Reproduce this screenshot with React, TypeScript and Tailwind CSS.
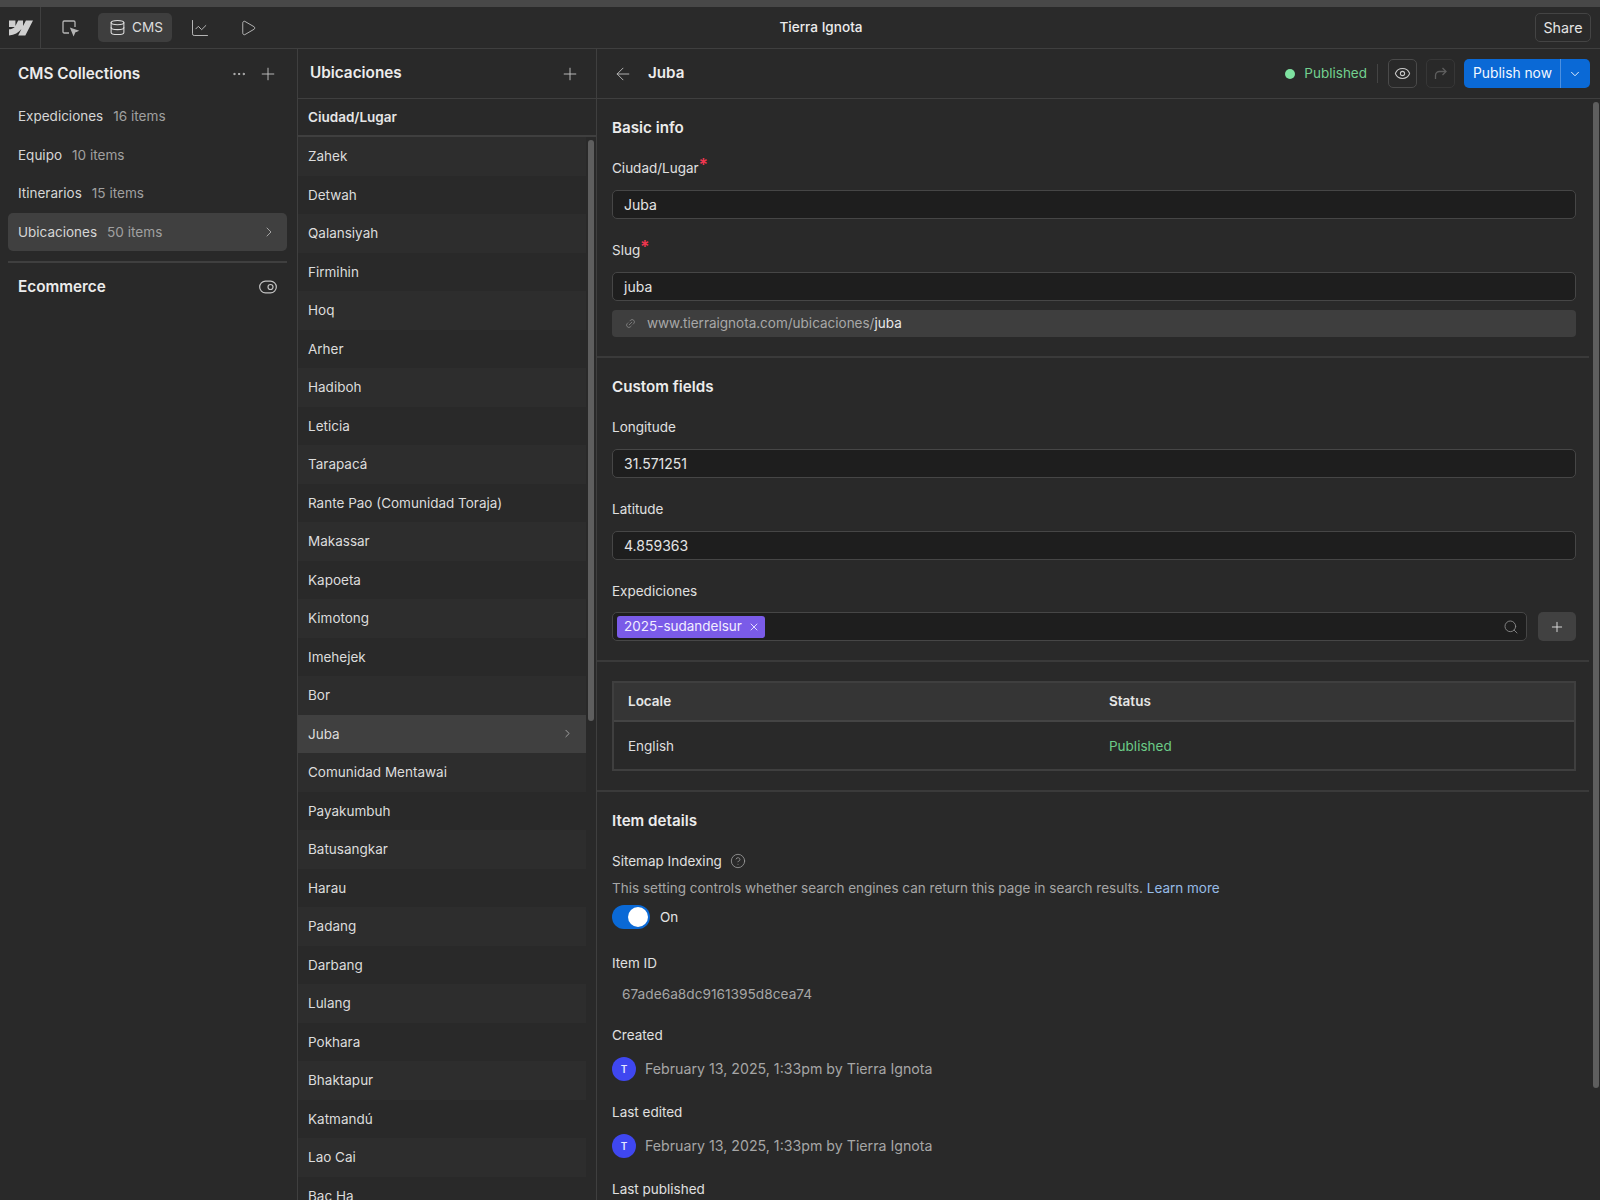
import { ReactNode } from 'react';
import { ArrowLeft, ChartLine, ChevronDown, ChevronRight, CircleHelp, Database, Ellipsis, Eye, Link2, Play, Plus, Search, ToggleRight, X } from 'lucide-react';
import { SiWebflow } from 'react-icons/si';

const collections = [
  { name: 'Expediciones', count: '16 items' },
  { name: 'Equipo', count: '10 items' },
  { name: 'Itinerarios', count: '15 items' },
  { name: 'Ubicaciones', count: '50 items', active: true },
];

const places = [
  'Zahek', 'Detwah', 'Qalansiyah', 'Firmihin', 'Hoq', 'Arher', 'Hadiboh', 'Leticia', 'Tarapacá',
  'Rante Pao (Comunidad Toraja)', 'Makassar', 'Kapoeta', 'Kimotong', 'Imehejek', 'Bor', 'Juba',
  'Comunidad Mentawai', 'Payakumbuh', 'Batusangkar', 'Harau', 'Padang', 'Darbang', 'Lulang',
  'Pokhara', 'Bhaktapur', 'Katmandú', 'Lao Cai', 'Bac Ha',
];

function Label({ children, className = '' }: { children: ReactNode; className?: string }) {
  return <div className={`h-5 leading-5 text-[13.5px] text-[#e0e0e0] ${className}`}>{children}</div>;
}

function Heading({ children }: { children: ReactNode }) {
  return <h2 className="h-5 leading-[22px] text-[15.2px] font-semibold text-[#ececec]">{children}</h2>;
}

function Required() {
  return <span className="relative -top-[2px] text-[17px] leading-none font-semibold text-[#f0364f]">*</span>;
}

function TextInput({ value, className = '' }: { value: string; className?: string }) {
  return (
    <div className={`h-[29px] rounded-[5px] border border-[#464646] bg-[#1e1e1e] px-[11px] leading-[27px] text-[14px] text-[#e4e4e4] ${className}`}>
      {value}
    </div>
  );
}

function Avatar() {
  return (
    <div className="flex items-center gap-[9px] h-6 mt-3">
      <span className="flex h-6 w-6 items-center justify-center rounded-full bg-[#3f47f0] text-[10px] font-semibold text-[#e6e8ff]">T</span>
      <span className="text-[14.2px] text-[#a6a6a6]">February 13, 2025, 1:33pm by Tierra Ignota</span>
    </div>
  );
}

export default function App() {
  return (
    <div className="h-[1200px] w-[1600px] overflow-hidden bg-[#292929] font-['Inter',sans-serif] text-[13.5px] text-[#e0e0e0] flex flex-col">
      <div className="h-[7px] shrink-0 bg-[#484848]" />

      {/* top bar */}
      <header className="h-[42px] shrink-0 flex items-center border-b border-[#3f3f3f] bg-[#2a2a2a]">
        <div className="flex h-full w-[41px] items-center justify-center border-r border-[#3f3f3f]">
          <SiWebflow size={24} color="#cfcfcf" className="ml-px" />
        </div>
        <div className="flex items-center ml-[19px]">
          <svg width="20" height="20" viewBox="0 0 20 20" fill="none" stroke="#b5b5b5" strokeWidth="1.3">
            <path d="M9 15H4.2c-.7 0-1.2-.5-1.2-1.2V4.2C3 3.5 3.5 3 4.2 3h9.6c.7 0 1.2.5 1.2 1.2V9" />
            <path d="M11 10.5l6.5 2.4-2.7 1.1-1.2 2.8z" fill="#b5b5b5" />
          </svg>
          <div className="ml-[18px] flex h-[29px] w-[74px] items-center gap-[6px] rounded-[5px] bg-[#3e3e3e] pl-[11px] text-[#dcdcdc]">
            <Database size={17} strokeWidth={1.5} />
            <span className="text-[13.6px]">CMS</span>
          </div>
          <ChartLine size={20} strokeWidth={1.2} className="ml-[18px] text-[#b5b5b5]" />
          <Play size={18} strokeWidth={1.3} className="ml-[29px] text-[#b5b5b5]" />
        </div>
        <div className="flex-1 text-center text-[13.6px] font-medium text-[#ececec] pr-[150px]">Tierra Ignota</div>
        <div className="mr-[9px] flex h-[29px] w-[56px] items-center justify-center rounded-[5px] border border-[#444444] text-[14.3px] text-[#e4e4e4]">Share</div>
      </header>

      <div className="flex flex-1 min-h-0">
        {/* collections */}
        <aside className="w-[298px] shrink-0 border-r border-[#3f3f3f] pl-[8px] pr-[10px]">
          <div className="flex h-[48px] items-center justify-between pl-[10px] pr-[9px] pt-[2px]">
            <span className="text-[15.3px] font-semibold text-[#ececec]">CMS Collections</span>
            <div className="flex items-center gap-[11px] text-[#c4c4c4]">
              <Ellipsis size={16} strokeWidth={1.5} />
              <Plus size={20} strokeWidth={1.1} />
            </div>
          </div>
          <ul>
            {collections.map((c) => (
              <li
                key={c.name}
                className={`flex h-[38.5px] items-center gap-[10px] rounded-[5px] px-[10px] ${c.active ? 'bg-[#404040]' : ''}`}
              >
                <span className="text-[#d6d6d6]">{c.name}</span>
                <span className="text-[13.6px] text-[#a0a0a0]">{c.count}</span>
                {c.active && <ChevronRight size={16} strokeWidth={1.2} className="ml-auto text-[#bdbdbd]" />}
              </li>
            ))}
          </ul>
          <div className="mt-[10px] border-t-2 border-[#3f3f3f]" />
          <div className="mt-[14px] flex h-5 items-center justify-between pl-[10px] pr-[9px]">
            <span className="text-[15.3px] font-semibold text-[#ececec]">Ecommerce</span>
            <ToggleRight size={20} strokeWidth={1.4} className="text-[#c4c4c4]" />
          </div>
        </aside>

        {/* items */}
        <section className="w-[299px] shrink-0 border-r border-[#3f3f3f] flex flex-col">
          <div className="flex h-[50px] shrink-0 items-center justify-between border-b border-[#3f3f3f] pl-[12px] pr-[16px]">
            <span className="text-[15.3px] font-semibold text-[#ececec]">Ubicaciones</span>
            <Plus size={20} strokeWidth={1.1} className="text-[#c4c4c4]" />
          </div>
          <div className="flex h-[38px] shrink-0 items-center border-b-2 border-[#3f3f3f] pl-[10px] font-semibold text-[#e6e6e6]">Ciudad/Lugar</div>
          <div className="flex flex-1 min-h-0 overflow-hidden">
            <ul className="w-[288px] shrink-0">
              {places.map((p, i) => (
                <li
                  key={p}
                  className={`flex h-[38.5px] items-center justify-between pl-[10px] pr-[12px] text-[#dcdcdc] ${p === 'Juba' ? 'bg-[#404040]' : i % 2 === 0 ? 'bg-[#2d2d2d]' : 'bg-[#292929]'}`}
                >
                  <span>{p}</span>
                  {p === 'Juba' && <ChevronRight size={13} strokeWidth={1.4} className="text-[#bdbdbd]" />}
                </li>
              ))}
            </ul>
            <div className="ml-[2px] mt-[3px] h-[581px] w-[6px] rounded-full bg-[#5e5e5e]" />
          </div>
        </section>

        {/* item detail */}
        <main className="flex-1 min-w-0 flex flex-col">
          <div className="flex h-[50px] shrink-0 items-center border-b border-[#3f3f3f] pl-[16px] pr-[10px]">
            <ArrowLeft size={20} strokeWidth={1.1} className="text-[#bdbdbd]" />
            <span className="ml-[15px] text-[15.2px] font-semibold text-[#ececec]">Juba</span>
            <div className="ml-auto flex items-center">
              <span className="h-[10px] w-[10px] rounded-full bg-[#7ee2a0]" />
              <span className="ml-[9px] text-[13.5px] text-[#73d08f]">Published</span>
              <span className="ml-[10px] h-[19px] w-px bg-[#444444]" />
              <span className="ml-[10px] flex h-[29px] w-[29px] items-center justify-center rounded-[5px] border border-[#4a4a4a] text-[#c8c8c8]">
                <Eye size={17} strokeWidth={1.5} />
              </span>
              <span className="ml-[9px] flex h-[29px] w-[29px] items-center justify-center rounded-[5px] border border-[#373737] text-[#5e5e5e]">
                <svg width="15" height="15" viewBox="0 0 15 15" fill="none" stroke="currentColor" strokeWidth="1.3">
                  <path d="M2.5 13V9.5c0-2.5 2-4 4-4H13" />
                  <path d="M9.5 2l3.5 3.5L9.5 9" />
                </svg>
              </span>
              <span className="ml-[9px] flex h-[29px] w-[126px] items-stretch overflow-hidden rounded-[5px] bg-[#0a69d6] text-[#f2f7ff]">
                <span className="flex w-[97px] items-center justify-center border-r border-[#4d90e0] pl-px text-[13.8px]">Publish now</span>
                <span className="flex flex-1 items-center justify-center pr-px">
                  <ChevronDown size={14} strokeWidth={1.6} />
                </span>
              </span>
            </div>
          </div>

          <div className="flex flex-1 min-h-0 overflow-hidden">
            <div className="w-[992px] shrink-0">
              <section className="border-b-2 border-[#3a3a3a] pl-[15px] pr-[13px] pt-[18px] pb-[19px]">
                <Heading>Basic info</Heading>
                <Label className="mt-[21px]">Ciudad/Lugar<Required /></Label>
                <TextInput value="Juba" className="mt-[12px]" />
                <Label className="mt-[21px]">Slug<Required /></Label>
                <TextInput value="juba" className="mt-[12px]" />
                <div className="mt-[9px] flex h-[27px] items-center rounded-[4px] bg-[#3e3e3e] pl-[13px] text-[#a8a8a8]">
                  <Link2 size={11} strokeWidth={1.6} className="text-[#8e8e8e] -rotate-45" />
                  <span className="ml-[11px]">www.tierraignota.com/ubicaciones/<span className="text-[#e8e8e8]">juba</span></span>
                </div>
              </section>

              <section className="border-b-2 border-[#3a3a3a] pl-[15px] pr-[13px] pt-[18px] pb-[19px]">
                <Heading>Custom fields</Heading>
                <Label className="mt-[21px]">Longitude</Label>
                <TextInput value="31.571251" className="mt-[12px]" />
                <Label className="mt-[21px]">Latitude</Label>
                <TextInput value="4.859363" className="mt-[12px]" />
                <Label className="mt-[21px]">Expediciones</Label>
                <div className="mt-[11px] flex gap-[11px]">
                  <div className="flex h-[29px] flex-1 items-center rounded-[5px] border border-[#464646] bg-[#1e1e1e] pl-[4px] pr-[7px]">
                    <span className="flex h-[22px] items-center gap-[6px] rounded-[3px] bg-[#7a5be8] pl-[7px] pr-[5px] text-[13.5px] text-[#f2eeff]">
                      2025-sudandelsur
                      <X size={12} strokeWidth={2} className="text-[#e4dcff]" />
                    </span>
                    <Search size={16} strokeWidth={1.3} className="ml-auto text-[#8e8e8e]" />
                  </div>
                  <div className="flex h-[29px] w-[38px] items-center justify-center rounded-[5px] bg-[#414141] text-[#e0e0e0]">
                    <Plus size={16} strokeWidth={1.4} />
                  </div>
                </div>
              </section>

              <section className="border-b-2 border-[#3a3a3a] pl-[15px] pr-[13px] pt-[19px] pb-[19px]">
                <div className="h-[90px] border-2 border-[#3f3f3f] border-t-2">
                  <div className="flex h-[39px] items-center border-b-2 border-[#444444] bg-[#353535] font-semibold text-[#e6e6e6]">
                    <span className="w-[495px] pl-[14px]">Locale</span>
                    <span>Status</span>
                  </div>
                  <div className="flex h-[47px] items-center pt-[2px]">
                    <span className="w-[495px] pl-[14px] text-[#dedede]">English</span>
                    <span className="text-[#6ccb88]">Published</span>
                  </div>
                </div>
              </section>

              <section className="pl-[15px] pr-[13px] pt-[18px]">
                <Heading>Item details</Heading>
                <Label className="mt-[21px] flex items-center gap-[8px]">
                  Sitemap Indexing
                  <CircleHelp size={16} strokeWidth={1.2} className="text-[#a0a0a0]" />
                </Label>
                <div className="mt-[7px] h-5 leading-5 text-[#a6a6a6]">
                  This setting controls whether search engines can return this page in search results. <span className="text-[#96bbe6]">Learn more</span>
                </div>
                <div className="mt-[7px] flex h-6 items-center">
                  <span className="flex h-6 w-[38px] items-center justify-end rounded-full bg-[#0a69d6] pr-[2px]">
                    <span className="h-5 w-5 rounded-full bg-white" />
                  </span>
                  <span className="ml-[10px] text-[#e4e4e4]">On</span>
                </div>
                <Label className="mt-[24px]">Item ID</Label>
                <div className="mt-[11px] h-5 pl-[10px] leading-5 text-[13.7px] text-[#a6a6a6]">67ade6a8dc9161395d8cea74</div>
                <Label className="mt-[21px]">Created</Label>
                <Avatar />
                <Label className="mt-[21px]">Last edited</Label>
                <Avatar />
                <Label className="mt-[21px]">Last published</Label>
              </section>
            </div>
            <div className="ml-[4px] mt-[3px] h-[986px] w-[6px] rounded-full bg-[#5e5e5e]" />
          </div>
        </main>
      </div>
    </div>
  );
}
